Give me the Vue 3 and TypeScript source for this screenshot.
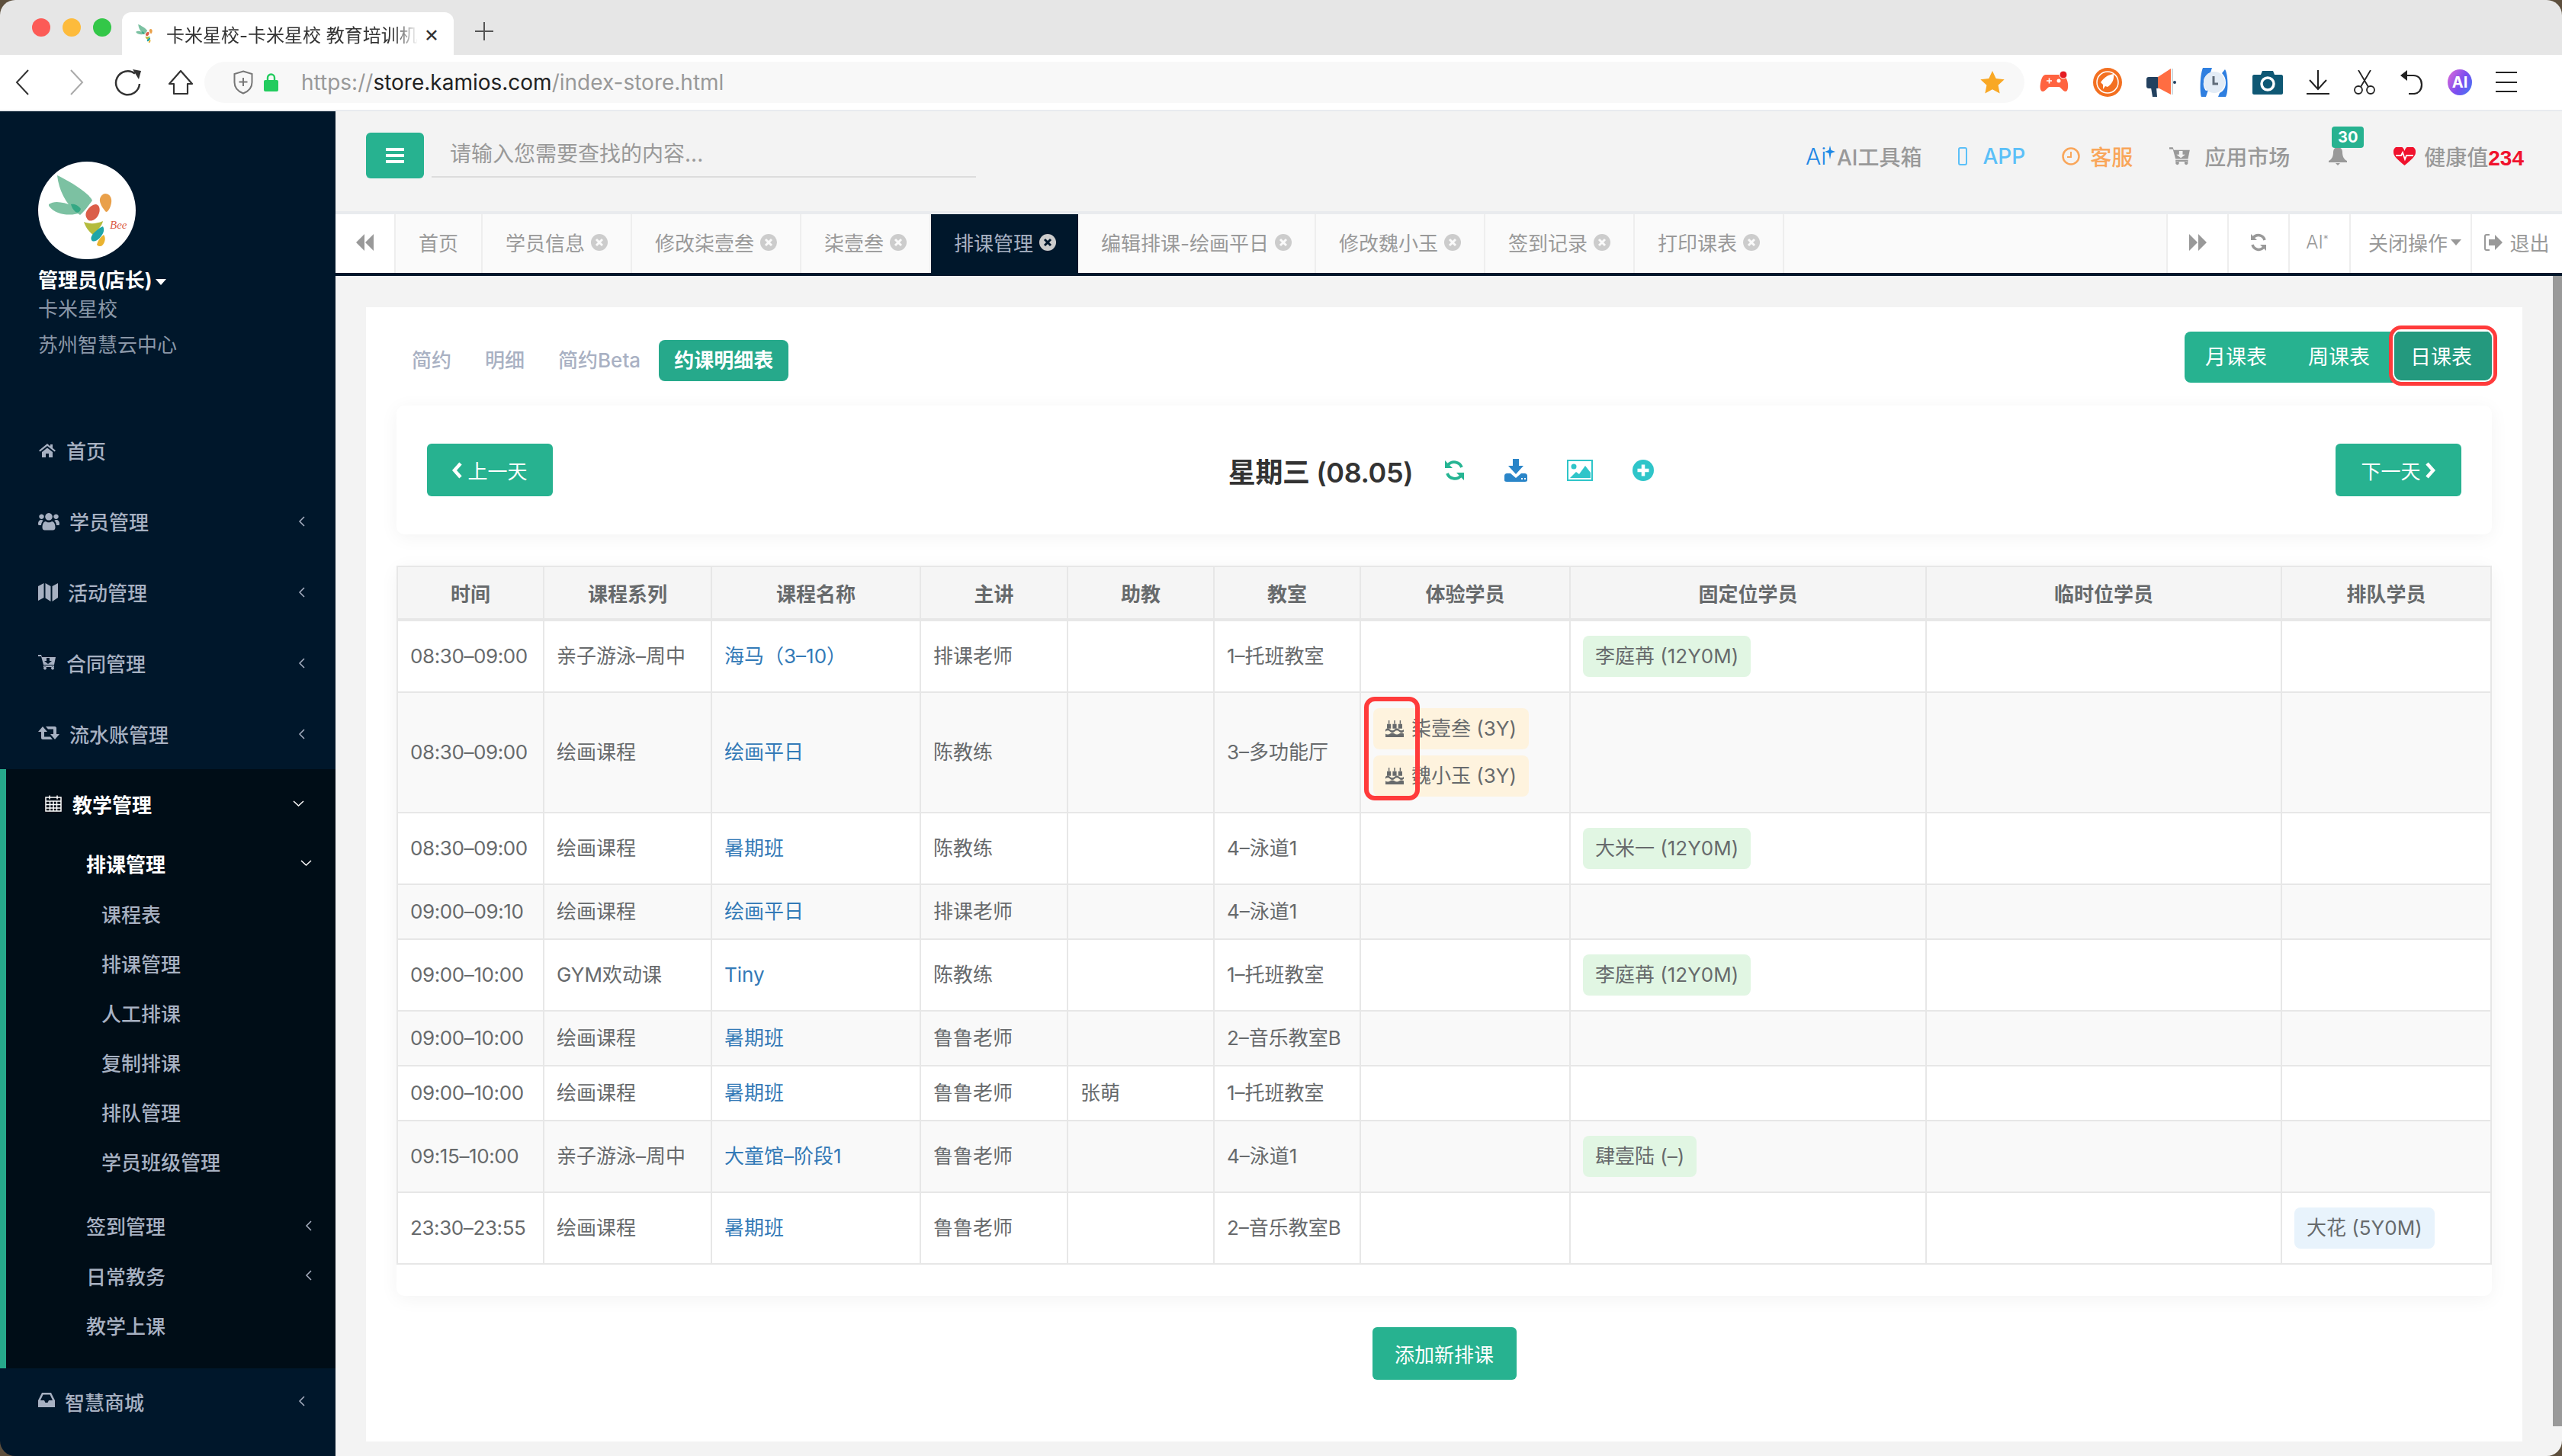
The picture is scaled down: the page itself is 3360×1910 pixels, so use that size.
<script setup lang="ts">
interface NavItem {
  label: string
  icon: string
  w: number
  arrow: boolean
}

const logoShapes = [
  { d: 'M25 18C38 24 66 40 71 51C66 58 60 66 55 70C42 62 28 44 25 18Z', fill: '#7cc1a2' },
  { d: 'M14 56C22 50 34 54 44 57C50 58 56 62 56 67C46 71 24 72 14 58Z', fill: '#7cc1a2' },
  { d: 'M43 56C48 55 53 58 56 62C55 66 52 68 49 66C46 63 44 60 43 56Z', fill: '#35a884' },
  { d: 'M88 42C94 42 97 48 96 54C95 60 92 66 89 66C85 62 80 54 81 49C82 45 85 42 88 42Z', fill: '#e9a04a' },
  { d: 'M76 56C81 57 82 64 79 70C76 76 70 79 66 77C62 73 61 68 65 63C68 59 72 56 76 56Z', fill: '#db5e49' },
  { d: 'M60 79C67 82 76 82 85 78C84 84 78 90 72 96C67 92 62 86 60 79Z', fill: '#b4bb3d' },
  { d: 'M85 85C88 90 85 96 80 101C77 104 72 106 70 103C68 99 72 94 76 91C79 88 82 86 85 85Z', fill: '#1fa5a8' },
  { d: 'M86 96C89 100 88 106 84 110C82 112 78 111 77 109C78 104 82 99 86 96Z', fill: '#eab330' }
]

const icons: Record<string, string> = {
  home: 'M12 3 1 12l1.500 1.500L12 6l9.500 7.500L23 12l-4-3.200V4h-3v2.400zM5 14v7h5v-5h4v5h5v-7l-7-5.500z',
  users: 'M4.500 2.500a3.200 3.200 0 1 0 .01 0zM23.500 2.500a3.200 3.200 0 1 0 .01 0zM14 1a4.800 4.800 0 1 0 .01 0zM0 15c0-3 1.500-5 4-5 1 0 2 .4 2.800 1-1.600 1.400-2.600 3-2.800 6H1.500C.5 17 0 16.500 0 15zM28 15c0-3-1.500-5-4-5-1 0-2 .4-2.800 1 1.600 1.400 2.600 3 2.800 6h2.500c1 0 1.500-.5 1.500-2zM5.500 20c0-4 1.500-8 4.500-8 1 .9 2.500 1.300 4 1.300s3-.4 4-1.300c3 0 4.500 4 4.500 8 0 2.500-1.500 3.500-3 3.500H8.500c-1.500 0-3-1-3-3.500z',
  map: 'M0 4 7.500 0v19L0 23zM9.500 0l7 4v20l-7-4.500zM18.500 4 26 0v19l-7.500 5z',
  cart: 'M0 1h4l1 3h18l-2 10H7L4 3H0zM11 5v4H8l5 4 5-4h-3V5zM7 15h14v2H7zM7 18.500a2 2 0 1 1 0 .1zM17 18.500a2 2 0 1 1 0 .1z',
  retweet: 'M6 2 0 9h4v8c0 1 1 2 2 2h13l-3-3.500H8V9h4zM10 2h12c1 0 2 1 2 2v8h4l-6 7-6-7h4V5.500h-7z',
  calendar: 'M2 4h20v18H2zM7 1.500v5M17 1.500v5M2 9h20M2 13.500h20M2 18h20M7.500 9v13M12 9v13M16.500 9v13',
  inbox: 'M5 1h12l5 10v9H0v-9zM6.500 3.500 3 11h5l1.500 3h3L14 11h5l-3.500-7.500z'
}

const topNav: NavItem[] = [
  { label: '首页', icon: 'home', w: 24, arrow: false },
  { label: '学员管理', icon: 'users', w: 28, arrow: true },
  { label: '活动管理', icon: 'map', w: 26, arrow: true },
  { label: '合同管理', icon: 'cart', w: 24, arrow: true },
  { label: '流水账管理', icon: 'retweet', w: 28, arrow: true }
]
const subLinks = ['课程表', '排课管理', '人工排课', '复制排课', '排队管理', '学员班级管理']
const subGroups = [
  { label: '签到管理', arrow: true },
  { label: '日常教务', arrow: true },
  { label: '教学上课', arrow: false }
]

const tabs = [
  { label: '首页', close: false, active: false },
  { label: '学员信息', close: true, active: false },
  { label: '修改柒壹叁', close: true, active: false },
  { label: '柒壹叁', close: true, active: false },
  { label: '排课管理', close: true, active: true },
  { label: '编辑排课-绘画平日', close: true, active: false },
  { label: '修改魏小玉', close: true, active: false },
  { label: '签到记录', close: true, active: false },
  { label: '打印课表', close: true, active: false }
]

const colWidths = [192, 220, 274, 193, 192, 192, 275, 467, 466, 275]
const headers = ['时间', '课程系列', '课程名称', '主讲', '助教', '教室', '体验学员', '固定位学员', '临时位学员', '排队学员']

const rows = [
  { time: '08:30–09:00', series: '亲子游泳–周中', name: '海马（3–10）', teacher: '排课老师', helper: '', room: '1–托班教室', trial: [] as string[], fixed: '李庭苒 (12Y0M)', queue: '' },
  { time: '08:30–09:00', series: '绘画课程', name: '绘画平日', teacher: '陈教练', helper: '', room: '3–多功能厅', trial: ['柒壹叁 (3Y)', '魏小玉 (3Y)'], fixed: '', queue: '' },
  { time: '08:30–09:00', series: '绘画课程', name: '暑期班', teacher: '陈教练', helper: '', room: '4–泳道1', trial: [], fixed: '大米一 (12Y0M)', queue: '' },
  { time: '09:00–09:10', series: '绘画课程', name: '绘画平日', teacher: '排课老师', helper: '', room: '4–泳道1', trial: [], fixed: '', queue: '' },
  { time: '09:00–10:00', series: 'GYM欢动课', name: 'Tiny', teacher: '陈教练', helper: '', room: '1–托班教室', trial: [], fixed: '李庭苒 (12Y0M)', queue: '' },
  { time: '09:00–10:00', series: '绘画课程', name: '暑期班', teacher: '鲁鲁老师', helper: '', room: '2–音乐教室B', trial: [], fixed: '', queue: '' },
  { time: '09:00–10:00', series: '绘画课程', name: '暑期班', teacher: '鲁鲁老师', helper: '张萌', room: '1–托班教室', trial: [], fixed: '', queue: '' },
  { time: '09:15–10:00', series: '亲子游泳–周中', name: '大童馆–阶段1', teacher: '鲁鲁老师', helper: '', room: '4–泳道1', trial: [], fixed: '肆壹陆 (–)', queue: '' },
  { time: '23:30–23:55', series: '绘画课程', name: '暑期班', teacher: '鲁鲁老师', helper: '', room: '2–音乐教室B', trial: [], fixed: '', queue: '大花 (5Y0M)' }
]
</script>

<template>
  <div class="window">
    <!-- browser chrome -->
    <div class="tab-strip">
      <div class="lights">
        <i class="light red"></i>
        <i class="light yellow"></i>
        <i class="light green"></i>
      </div>
      <div class="browser-tab">
        <svg class="favicon" width="26" height="26" viewBox="10 15 90 100">
          <path v-for="s in logoShapes" :key="s.d" :d="s.d" :fill="s.fill" />
        </svg>
        <span class="browser-title">卡米星校-卡米星校 教育培训机</span>
        <span class="browser-close">×</span>
      </div>
      <svg class="new-tab" width="24" height="24" viewBox="0 0 24 24"><path d="M12 0v24M0 12h24" stroke="#555" stroke-width="2" /></svg>
    </div>

    <div class="address-row">
      <svg width="18" height="34" viewBox="0 0 18 34" class="nav-back"><path d="M17 1 2 17l15 16" fill="none" stroke="#333" stroke-width="2" /></svg>
      <svg width="18" height="34" viewBox="0 0 18 34" class="nav-forward"><path d="m1 1 15 16L1 33" fill="none" stroke="#aaa" stroke-width="2" /></svg>
      <svg width="36" height="36" viewBox="0 0 36 36" class="nav-reload"><path d="M27 6.500A15.500 15.500 0 1 0 33 20" fill="none" stroke="#333" stroke-width="2.500" /><path d="M24 1l11 2-3 11z" fill="#333" /></svg>
      <svg width="34" height="34" viewBox="0 0 34 34" class="nav-home"><path d="M17 2 2 19h6v13h18V19h6z" fill="none" stroke="#333" stroke-width="2.200" stroke-linejoin="round" /></svg>
      <div class="url-box">
        <svg width="26" height="32" viewBox="0 0 26 32"><path d="M13 1.500 24.500 5v11c0 7-5 12-11.500 14.500C6.500 28 1.500 23 1.500 16V5z" fill="none" stroke="#777" stroke-width="2" /><path d="M13 10v11M7.500 15.500h11" stroke="#777" stroke-width="2" /></svg>
        <svg class="lock" width="19" height="24" viewBox="0 0 19 24"><path d="M5 10V6a4.500 4.500 0 0 1 9 0v4" fill="none" stroke="#22cc5e" stroke-width="2.400" /><rect y="9" width="19" height="15" rx="2" fill="#22cc5e" /></svg>
        <span class="url"><span class="url-dim">https://</span>store.kamios.com<span class="url-dim">/index-store.html</span></span>
        <svg class="star" width="32" height="30" viewBox="0 0 24 23"><path d="m12 0 3.600 7.700 8.400 1-6.200 5.700 1.600 8.300L12 18.600l-7.400 4.100 1.600-8.300L0 8.700l8.400-1z" fill="#f9a825" /></svg>
      </div>
      <div class="extensions">
        <svg width="40" height="32" viewBox="0 0 40 32"><path d="M9 6h20c5 0 8 5 9 12 .6 5-.5 10-3 10-4 0-6-6-9-6H14c-3 0-5 6-9 6-3 0-4-5-3-10C3 11 5 6 9 6z" fill="#ff6340" /><path d="M10 14h7M13.500 10.500v7" stroke="#fff" stroke-width="1.600" /><circle cx="26" cy="14" r="2.500" fill="#fff" /><circle cx="32" cy="6" r="5" fill="#e51c23" stroke="#fff" stroke-width="1" /></svg>
        <svg width="38" height="38" viewBox="0 0 38 38"><circle cx="19" cy="19" r="19" fill="#f37021" /><circle cx="19" cy="19" r="14" fill="none" stroke="#fff" stroke-width="1.500" /><path d="M27 8c1 7-2 13-8 17l-3-1-3 4v-6l-3-3c5-7 10-10 17-11z" fill="#fff" /></svg>
        <svg width="40" height="38" viewBox="0 0 40 38"><rect x="1" y="12" width="17" height="15" rx="3" fill="#23415f" /><path d="M7 26h7l1 12h-6z" fill="#23415f" /><path d="M16 12 33 1v34L16 26z" fill="#ff6d42" /><path d="M35 1v34" stroke="#cfd8dc" stroke-width="2" /><circle cx="38" cy="19" r="2" fill="#23415f" /></svg>
        <svg width="38" height="38" viewBox="0 0 38 38"><path d="M4 0h12l-2 6C8 9 5 13 5 19 4 22 6 28 8 30l3-1-3 9H2c-2-6-2-28 2-38z" fill="#2f7fe0" /><path d="M34 38H24l2-5c6-3 8-8 8-14 0-5-2-9-5-12l4-5c4 5 5 30 1 36z" fill="#2f7fe0" /><circle cx="19" cy="19" r="14" fill="#e3ecf6" /><path d="M18 11v10h6" fill="none" stroke="#606c7a" stroke-width="3" /></svg>
        <svg width="40" height="32" viewBox="0 0 40 32"><path d="M2 6h9l2-5h14l2 5h9c1 0 2 1 2 2v22c0 1-1 2-2 2H2c-1 0-2-1-2-2V8c0-1 1-2 2-2z" fill="#0f5874" /><circle cx="20" cy="18" r="8" fill="none" stroke="#fff" stroke-width="3.500" /></svg>
        <svg width="30" height="32" viewBox="0 0 30 32"><path d="M15 0v25M4 13l11 12 11-12M0 31h30" fill="none" stroke="#222" stroke-width="2" /></svg>
        <svg width="30" height="32" viewBox="0 0 30 32"><path d="M7 0l13 22M23 0 10 22" fill="none" stroke="#222" stroke-width="1.800" /><circle cx="7" cy="26" r="5" fill="none" stroke="#222" stroke-width="1.800" /><circle cx="23" cy="26" r="5" fill="none" stroke="#222" stroke-width="1.800" /></svg>
        <svg width="32" height="32" viewBox="0 0 32 32"><path d="M4 7h14c7 0 11 5 11 12 0 7-4 12-11 12h-6" fill="none" stroke="#222" stroke-width="2.200" /><path d="M10 0v14L1 7z" fill="#222" /></svg>
        <div class="ai-badge">AI</div>
        <svg width="28" height="28" viewBox="0 0 28 28"><path d="M0 1h28M0 14h28M0 26h28" stroke="#222" stroke-width="2" /></svg>
      </div>
    </div>

    <div class="app-body">
      <!-- sidebar -->
      <aside class="sidebar">
        <div class="profile">
          <svg class="avatar" width="128" height="128" viewBox="0 0 128 128">
            <circle cx="64" cy="64" r="64" fill="#fff" />
            <path v-for="s in logoShapes" :key="s.d" :d="s.d" :fill="s.fill" />
            <text x="94" y="88" class="bee">Bee</text>
          </svg>
          <div class="profile-name">管理员(店长)<i class="caret"></i></div>
          <div class="profile-line">卡米星校</div>
          <div class="profile-line second">苏州智慧云中心</div>
        </div>

        <nav class="nav">
          <a v-for="item in topNav" :key="item.label" class="nav-row">
            <svg :width="item.w" height="24" :viewBox="`0 0 ${item.w} 24`" class="nav-icon"><path :d="icons[item.icon]" fill="#a7b1c2" fill-rule="evenodd" /></svg>
            <span>{{ item.label }}</span>
            <svg v-if="item.arrow" class="chev" width="9" height="14" viewBox="0 0 9 14"><path d="M8 1 2 7l6 6" fill="none" stroke="#a7b1c2" stroke-width="1.500" /></svg>
          </a>

          <div class="nav-active">
            <a class="active-head">
              <svg width="24" height="24" viewBox="0 0 24 24" class="nav-icon"><path :d="icons.calendar" fill="none" stroke="#fff" stroke-width="1.500" /></svg>
              <span>教学管理</span>
              <svg class="chev-down" width="15" height="9" viewBox="0 0 15 9"><path d="m1 1 6.500 6L14 1" fill="none" stroke="#fff" stroke-width="1.500" /></svg>
            </a>
            <a class="sub-head">
              <span>排课管理</span>
              <svg class="chev-down" width="15" height="9" viewBox="0 0 15 9"><path d="m1 1 6.500 6L14 1" fill="none" stroke="#fff" stroke-width="1.500" /></svg>
            </a>
            <a v-for="link in subLinks" :key="link" class="sub-link">{{ link }}</a>
            <a v-for="g in subGroups" :key="g.label" class="sub-group">
              <span>{{ g.label }}</span>
              <svg v-if="g.arrow" class="chev" width="9" height="14" viewBox="0 0 9 14"><path d="M8 1 2 7l6 6" fill="none" stroke="#a7b1c2" stroke-width="1.500" /></svg>
            </a>
          </div>

          <a class="nav-row last">
            <svg width="22" height="24" viewBox="0 0 22 24" class="nav-icon"><path :d="icons.inbox" fill="#a7b1c2" fill-rule="evenodd" /></svg>
            <span>智慧商城</span>
            <svg class="chev" width="9" height="14" viewBox="0 0 9 14"><path d="M8 1 2 7l6 6" fill="none" stroke="#a7b1c2" stroke-width="1.500" /></svg>
          </a>
        </nav>
      </aside>

      <main class="main">
        <!-- top header -->
        <header class="topbar">
          <button class="menu-btn">
            <svg width="24" height="20" viewBox="0 0 24 20"><path d="M0 0h24v4H0zM0 8h24v4H0zM0 16h24v4H0z" fill="#fff" /></svg>
          </button>
          <div class="search">请输入您需要查找的内容...</div>
          <div class="top-items">
            <span class="top-item ai-tools">
              <span class="ai-mark">Ai<svg width="14" height="18" viewBox="0 0 14 18"><path d="m7 0 1.500 6L14 8 8.500 10 7 18l-1.500-8L0 8l5.500-2z" fill="#1e88e5" /></svg></span>
              AI工具箱
            </span>
            <span class="top-item app">
              <svg width="12" height="24" viewBox="0 0 12 24"><rect x="1" y="1" width="10" height="22" rx="2" fill="none" stroke="#5bc0f8" stroke-width="2" /></svg>
              APP
            </span>
            <span class="top-item service">
              <svg width="24" height="24" viewBox="0 0 24 24"><circle cx="12" cy="12" r="10.500" fill="none" stroke="#f9a65a" stroke-width="2.500" /><path d="M12 6v7H7" fill="none" stroke="#f9a65a" stroke-width="2" /></svg>
              客服
            </span>
            <span class="top-item market">
              <svg width="28" height="26" viewBox="0 0 24 22"><path :d="icons.cart" fill="#999" fill-rule="evenodd" /></svg>
              应用市场
            </span>
            <span class="bell">
              <svg width="24" height="24" viewBox="0 0 24 24"><path d="M12 0c4 0 6 3 6 7 0 5 2 9 6 11v2H0v-2c4-2 6-6 6-11 0-4 2-7 6-7zM9 21h6l-3 3z" fill="#999" /></svg>
              <b class="bell-count">30</b>
            </span>
            <span class="top-item health">
              <svg width="29" height="24" viewBox="0 0 29 24"><path d="M14.500 24C6 17 0 12 0 7a7 7 0 0 1 14.500-2A7 7 0 0 1 29 7c0 5-6 10-14.500 17z" fill="#f0122d" /><path d="M3 11h7l2-4 3 9 2-5h9" fill="none" stroke="#fff" stroke-width="1.800" /></svg>
              <span>健康值<b class="score">234</b></span>
            </span>
          </div>
        </header>

        <!-- page tabs -->
        <div class="tabs">
          <div class="tab-tool arrow-left">
            <svg width="24" height="22" viewBox="0 0 24 22"><path d="M11 0v22L0 11zM23 0v22L12 11z" fill="#999" /></svg>
          </div>
          <div v-for="t in tabs" :key="t.label" class="tab" :class="{ active: t.active }">
            {{ t.label }}
            <svg v-if="t.close" width="22" height="22" viewBox="0 0 22 22" class="tab-x"><circle cx="11" cy="11" r="11" class="tab-x-bg" /><path d="m7 7 8 8M15 7l-8 8" stroke-width="3" class="tab-x-cross" /></svg>
          </div>
          <div class="tab-fill"></div>
          <div class="tab-tool">
            <svg width="24" height="22" viewBox="0 0 24 22"><path d="M1 0v22l11-11zM13 0v22l11-11z" fill="#999" /></svg>
          </div>
          <div class="tab-tool">
            <svg width="24" height="24" viewBox="0 0 24 24"><path d="M20 9A8.500 8.500 0 0 0 5 6M4 15a8.500 8.500 0 0 0 15 3" fill="none" stroke="#999" stroke-width="3.500" /><path d="M2 1v8h8zM22 23v-8h-8z" fill="#999" /></svg>
          </div>
          <div class="tab-tool tool-ai">AI<sup>*</sup></div>
          <div class="tab-tool tool-close">关闭操作<i class="caret gray"></i></div>
          <div class="tab-tool tool-exit">
            <svg width="24" height="22" viewBox="0 0 24 22"><path d="M7 1H3C2 1 1 2 1 3v16c0 1 1 2 2 2h4" fill="none" stroke="#999" stroke-width="2" /><path d="M6 7h8V1l10 10-10 10v-6H6z" fill="#999" /></svg>
            退出
          </div>
        </div>

        <div class="content">
          <section class="page-card">
            <div class="mode-row">
              <div class="pills">
                <span class="pill">简约</span>
                <span class="pill">明细</span>
                <span class="pill">简约Beta</span>
                <span class="pill on">约课明细表</span>
              </div>
              <div class="range-group">
                <span class="range">月课表</span>
                <span class="range">周课表</span>
                <span class="range on">日课表</span>
                <i class="mark-range"></i>
              </div>
            </div>

            <div class="day-card">
              <button class="teal-btn">
                <svg width="14" height="22" viewBox="0 0 14 22"><path d="M11 2 3 11l8 9" fill="none" stroke="#fff" stroke-width="4.500" /></svg>
                上一天
              </button>
              <div class="day-center">
                <h2 class="day-title">星期三 (08.05)</h2>
                <svg width="27" height="28" viewBox="0 0 27 28"><path d="M23 10A10.500 10.500 0 0 0 5 7M4 18a10.500 10.500 0 0 0 18 3" fill="none" stroke="#26b593" stroke-width="3.800" /><path d="M1 1v10h10zM26 27V17H16z" fill="#26b593" /></svg>
                <svg width="30" height="30" viewBox="0 0 30 30"><path d="M11 0h8v9h6L15 20 5 9h6z" fill="#2a85c8" /><path d="M3 19h5l7 6 7-6h5c1 0 3 1 3 3v6c0 1-1 2-3 2H3c-2 0-3-1-3-2v-6c0-2 2-3 3-3z" fill="#2a85c8" /><path d="M22 26h2M26 26h2" stroke="#fff" stroke-width="2" /></svg>
                <svg width="34" height="28" viewBox="0 0 34 28"><rect x="1" y="1" width="32" height="26" fill="none" stroke="#2fc5c9" stroke-width="2" /><circle cx="9" cy="9" r="3.500" fill="#2fc5c9" /><path d="M4 24l8-8 4 3 8-11 7 9v7z" fill="#2fc5c9" /></svg>
                <svg width="28" height="28" viewBox="0 0 28 28"><circle cx="14" cy="14" r="14" fill="#2fc5c9" /><path d="M14 6.500v15M6.500 14h15" stroke="#fff" stroke-width="4.500" /></svg>
              </div>
              <button class="teal-btn">
                下一天
                <svg width="14" height="22" viewBox="0 0 14 22"><path d="m3 2 8 9-8 9" fill="none" stroke="#fff" stroke-width="4.500" /></svg>
              </button>
            </div>

            <div class="table-card">
              <table class="schedule">
                <colgroup>
                  <col v-for="(w, i) in colWidths" :key="i" :style="{ width: w + 'px' }" />
                </colgroup>
                <thead>
                  <tr>
                    <th v-for="h in headers" :key="h">{{ h }}</th>
                  </tr>
                </thead>
                <tbody>
                  <tr v-for="(r, i) in rows" :key="i">
                    <td class="time-cell">{{ r.time }}</td>
                    <td>{{ r.series }}</td>
                    <td><a class="course">{{ r.name }}</a></td>
                    <td>{{ r.teacher }}</td>
                    <td>{{ r.helper }}</td>
                    <td>{{ r.room }}</td>
                    <td class="tag-cell trial-cell">
                      <div v-if="r.trial.length" class="trial-wrap">
                        <span v-for="s in r.trial" :key="s" class="tag orange">
                          <svg width="26" height="24" viewBox="0 0 26 24"><path d="M5 0v5M13 0v5M21 0v5M3 6h4v5H3zM11 6h4v5h-4zM19 6h4v5h-4z" stroke="#676a6c" stroke-width="1.600" fill="#676a6c" /><path d="M0 13c2-2 4.500-2 6.500 0s4.500 2 6.500 0 4.500-2 6.500 0 4.500 2 6.500 0v3c-2 2-4.500 2-6.500 0s-4.500-2-6.500 0-4.500 2-6.500 0-4.500-2-6.500 0zM0 19c2 1.500 4.500 1.500 6.500 0s4.500-1.500 6.500 0 4.500 1.500 6.500 0 4.500-1.500 6.500 0v5H0z" fill="#676a6c" /></svg>
                          {{ s }}
                        </span>
                        <i class="mark-cake"></i>
                      </div>
                    </td>
                    <td class="tag-cell"><span v-if="r.fixed" class="tag green">{{ r.fixed }}</span></td>
                    <td></td>
                    <td class="tag-cell"><span v-if="r.queue" class="tag blue">{{ r.queue }}</span></td>
                  </tr>
                </tbody>
              </table>
            </div>

            <div class="add-row">
              <button class="teal-btn add">添加新排课</button>
            </div>
          </section>
          <div class="scroll-track"><div class="scroll-thumb"></div></div>
        </div>
      </main>
    </div>
  </div>
</template>

<style>
html,
body {
  margin: 0;
  background: #5d4f3d;
}
</style>

<style scoped>
.window {
  width: 3360px;
  height: 1910px;
  display: flex;
  flex-direction: column;
  overflow: hidden;
  border-radius: 20px;
  font-family: Inter, "Noto Sans CJK SC", sans-serif;
  font-size: 26px;
  color: #676a6c;
}

.tab-strip {
  height: 72px;
  background: #e6e6e6;
  display: flex;
  align-items: flex-end;
  flex-shrink: 0;
}
.lights {
  display: flex;
  gap: 16px;
  padding: 0 0 24px 42px;
}
.light {
  width: 24px;
  height: 24px;
  border-radius: 50%;
}
.light.red { background: #fc5b57; }
.light.yellow { background: #fdbb3c; }
.light.green { background: #33c748; }
.browser-tab {
  margin-left: 14px;
  width: 435px;
  height: 56px;
  background: #fff;
  border-radius: 12px 12px 0 0;
  display: flex;
  align-items: center;
  padding-left: 16px;
  box-sizing: border-box;
}
.browser-title {
  margin-left: 16px;
  width: 330px;
  flex-shrink: 0;
  white-space: nowrap;
  font-size: 24px;
  color: #333;
  -webkit-mask-image: linear-gradient(90deg, #000 90%, transparent);
  mask-image: linear-gradient(90deg, #000 90%, transparent);
}
.browser-close {
  margin-left: 8px;
  font-size: 30px;
  color: #333;
}
.new-tab {
  margin: 0 0 19px 28px;
}

.address-row {
  height: 74px;
  box-sizing: border-box;
  background: #fff;
  display: flex;
  align-items: center;
  flex-shrink: 0;
  border-bottom: 2px solid #e8ebef;
}
.nav-back { margin-left: 20px; }
.nav-forward { margin-left: 54px; }
.nav-reload { margin-left: 40px; }
.nav-home { margin-left: 34px; }
.url-box {
  margin-left: 14px;
  width: 2387px;
  height: 54px;
  border-radius: 27px;
  background: #f8f8f8;
  display: flex;
  align-items: center;
  padding-left: 38px;
  box-sizing: border-box;
}
.lock { margin-left: 14px; }
.url {
  margin-left: 30px;
  font-size: 28px;
  color: #222;
}
.url-dim { color: #999; }
.star { margin-left: auto; margin-right: 26px; }
.extensions {
  margin-left: 19px;
  display: flex;
  align-items: center;
  gap: 31px;
}
.ai-badge {
  width: 32px;
  height: 34px;
  border-radius: 50%;
  background: linear-gradient(120deg, #e26ad8, #7a4df0 55%, #3f7cf4);
  color: #fff;
  font-size: 20px;
  font-weight: 700;
  text-align: center;
  line-height: 34px;
}

.app-body {
  flex: 1;
  display: flex;
  min-height: 0;
}

.sidebar {
  width: 440px;
  flex-shrink: 0;
  background: #00172b;
  color: #a7b1c2;
}
.profile {
  height: 398px;
  padding: 66px 0 0 50px;
  box-sizing: border-box;
}
.avatar { display: block; }
.bee {
  font-family: "Liberation Serif", serif;
  font-style: italic;
  font-size: 15px;
  fill: #db5e49;
}
.profile-name {
  margin-top: 12px;
  font-size: 26px;
  line-height: 32px;
  font-weight: 700;
  color: #fff;
}
.profile-line {
  margin-top: 2px;
  line-height: 40px;
  color: #8a97a8;
}
.profile-line.second { margin-top: 7px; }
.caret {
  display: inline-block;
  margin-left: 4px;
  vertical-align: middle;
  border-left: 7px solid transparent;
  border-right: 7px solid transparent;
  border-top: 8px solid #fff;
}
.caret.gray { border-top-color: #999; }

.nav-row {
  height: 93px;
  padding-left: 50px;
  padding-right: 40px;
  display: flex;
  align-items: center;
  gap: 13px;
  font-weight: 500;
}
.nav-row.last {
  height: 94px;
  box-sizing: border-box;
  padding-bottom: 8px;
}
.nav-icon { flex-shrink: 0; }
.chev { margin-left: auto; }
.nav-active {
  height: 786px;
  background: #000d17;
  border-left: 8px solid #26a98b;
  box-sizing: border-box;
  font-weight: 500;
}
.active-head {
  height: 96px;
  box-sizing: border-box;
  padding: 0 41px 6px 50px;
  display: flex;
  align-items: center;
  gap: 13px;
  color: #fff;
  font-weight: 700;
}
.chev-down { margin-left: auto; }
.sub-head {
  height: 60px;
  margin-top: -3px;
  padding: 0 31px 0 105px;
  display: flex;
  align-items: center;
  color: #fff;
  font-weight: 700;
}
.sub-link {
  display: block;
  height: 65px;
  line-height: 65px;
  padding-left: 125px;
}
.sub-head + .sub-link { margin-top: 6px; }
.sub-group {
  height: 65.500px;
  padding: 0 31px 0 105px;
  display: flex;
  align-items: center;
}
.sub-link + .sub-group { margin-top: 17px; }

.main {
  flex: 1;
  min-width: 0;
  display: flex;
  flex-direction: column;
  background: #f3f3f3;
}
.topbar {
  height: 131px;
  flex-shrink: 0;
  display: flex;
  align-items: flex-start;
  padding-top: 28px;
  padding-left: 40px;
  box-sizing: border-box;
}
.menu-btn {
  width: 76px;
  height: 60px;
  padding: 0;
  border: 0;
  border-radius: 6px;
  background: #27b290;
  display: flex;
  align-items: center;
  justify-content: center;
}
.search {
  margin-left: 10px;
  width: 714px;
  height: 59px;
  padding-left: 24px;
  box-sizing: border-box;
  border-bottom: 2px solid #dcdcdc;
  font-size: 28px;
  line-height: 56px;
  color: #999;
}
.top-items {
  margin-left: auto;
  padding-right: 50px;
  display: flex;
  align-items: center;
  height: 62px;
  font-size: 28px;
  font-weight: 500;
  color: #999;
}
.top-item {
  display: flex;
  align-items: center;
  gap: 11px;
  margin-left: 48px;
}
.ai-tools { gap: 9px; }
.ai-mark {
  display: inline-flex;
  align-items: flex-start;
  width: 32px;
  color: #1e88e5;
  font-weight: 300;
  font-size: 30px;
}
.ai-mark svg { margin-left: -2px; margin-top: 4px; flex-shrink: 0; }
.app { color: #5bc0f8; gap: 20px; }
.service { color: #f9a65a; gap: 13px; }
.market { gap: 18px; }
.bell {
  position: relative;
  margin-left: 51px;
  display: flex;
}
.bell-count {
  position: absolute;
  left: 4px;
  top: -27px;
  width: 42px;
  height: 28px;
  background: #27b290;
  border-radius: 4px;
  color: #fff;
  font-size: 20px;
  line-height: 28px;
  text-align: center;
}
.health { margin-left: 61px; }
.score {
  font-family: "Liberation Sans", sans-serif;
  color: #f0122d;
}

.tabs {
  height: 85px;
  flex-shrink: 0;
  box-sizing: border-box;
  background: #fafafa;
  border-top: 4px solid #e9ebee;
  border-bottom: 4px solid #00172b;
  display: flex;
  align-items: stretch;
  color: #999;
}
.tab {
  flex-shrink: 0;
  display: flex;
  align-items: center;
  gap: 8px;
  padding: 0 30px 4px;
  border-right: 2px solid #eeeeee;
  white-space: nowrap;
}
.tab.active {
  background: #00172b;
  color: #a7b1c2;
  border-right: 0;
  padding-right: 29px;
}
.tab-x-bg { fill: #ccc; }
.tab-x-cross { stroke: #fafafa; fill: none; }
.active .tab-x-cross { stroke: #00172b; }
.tab-fill { flex: 1; }
.tab-tool {
  width: 80px;
  flex-shrink: 0;
  box-sizing: border-box;
  padding-bottom: 4px;
  display: flex;
  align-items: center;
  justify-content: center;
  background: #fff;
  border-left: 2px solid #eeeeee;
}
.arrow-left {
  width: 79px;
  border-left: 0;
  border-right: 2px solid #eeeeee;
}
.tool-ai {
  font-size: 24px;
  font-weight: 300;
  padding-right: 6px;
}
.tool-ai sup { font-size: 14px; line-height: 0; margin-bottom: 8px; }
.tool-close {
  width: 159px;
  justify-content: flex-start;
  padding-left: 23px;
}
.tool-exit {
  width: 120px;
  gap: 9px;
}

.content {
  flex: 1;
  min-height: 0;
  display: flex;
  padding: 41px 0 19px 40px;
}
.page-card {
  width: 2828px;
  flex-shrink: 0;
  box-sizing: border-box;
  padding: 32px 40px 0;
  background: #fff;
}
.scroll-track {
  margin: -41px 0 0 40px;
  width: 12px;
}
.scroll-thumb {
  height: 1509px;
  background: #999;
}

.mode-row {
  height: 67px;
  display: flex;
  justify-content: space-between;
}
.pills {
  padding: 11px 0 0 20px;
  display: flex;
  gap: 44px;
}
.pill {
  height: 54px;
  line-height: 54px;
  color: #a9b1c3;
  font-weight: 500;
}
.pill.on {
  padding: 0 20px;
  margin-left: -20px;
  background: #26a98b;
  color: #fff;
  border-radius: 8px;
  font-weight: 700;
}
.range-group {
  position: relative;
  display: flex;
  background: #27b290;
  border-radius: 8px 0 0 8px;
  color: #fff;
  font-size: 27px;
}
.range {
  width: 135px;
  line-height: 67px;
  text-align: center;
}
.range.on {
  width: 133px;
  background: #24997e;
}
.mark-range {
  position: absolute;
  right: -7px;
  top: -8px;
  width: 142px;
  height: 79px;
  box-sizing: border-box;
  border: 5px solid #ff3b3b;
  border-radius: 16px;
  box-shadow: inset 0 0 0 2px #fff;
}

.day-card {
  margin-top: 30px;
  height: 169px;
  padding: 0 40px;
  display: flex;
  align-items: center;
  justify-content: space-between;
  border-radius: 10px;
  box-shadow: 0 4px 24px rgba(0, 0, 0, 0.05);
}
.teal-btn {
  width: 165px;
  height: 69px;
  padding: 0;
  border: 0;
  border-radius: 6px;
  background: #27b290;
  color: #fff;
  font-family: inherit;
  font-size: 26px;
  display: flex;
  align-items: center;
  justify-content: center;
  gap: 6px;
}
.day-center {
  margin-right: 8px;
  display: flex;
  align-items: center;
  gap: 52px;
}
.day-title {
  margin: 0 -11px 0 0;
  font-size: 36px;
  font-weight: 600;
  letter-spacing: -0.4px;
  color: #333;
}

.table-card {
  margin-top: 41px;
  padding-bottom: 41px;
  border-radius: 10px;
  box-shadow: 0 4px 24px rgba(0, 0, 0, 0.05);
}
.schedule {
  width: 2748px;
  table-layout: fixed;
  border-collapse: collapse;
  font-size: 26px;
}
.schedule th {
  height: 67px;
  padding: 0;
  background: #f5f5f5;
  border: 2px solid #e7e7e7;
  border-bottom-width: 4px;
  font-weight: 700;
}
.schedule td {
  padding: 16px 0 16px 16px;
  line-height: 38px;
  border: 2px solid #e7e7e7;
  white-space: nowrap;
}
.schedule .time-cell { letter-spacing: -0.4px; }
.schedule tbody tr:nth-child(even) { background: #f9f9f9; }
.course { color: #337ab7; }
.tag {
  display: inline-block;
  height: 54px;
  line-height: 54px;
  margin: 3px 0;
  padding: 0 16px;
  border-radius: 8px;
  vertical-align: middle;
}
.tag.orange {
  display: flex;
  align-items: center;
  gap: 10px;
  width: 204px;
  box-sizing: border-box;
  margin: 0 0 8px;
  background: #fef3de;
}
.tag.orange:last-of-type { margin-bottom: 0; }
.tag.green { background: #e1f6e3; }
.tag.blue { background: #e8f3fc; }
.trial-wrap {
  position: relative;
  padding: 4px 0;
}
.mark-cake {
  position: absolute;
  left: -12px;
  top: -11px;
  width: 73px;
  height: 136px;
  box-sizing: border-box;
  border: 6px solid #ff3b3b;
  border-radius: 14px;
}

.add-row {
  margin-top: 41px;
  display: flex;
  justify-content: center;
}
.add {
  width: 189px;
}
</style>
